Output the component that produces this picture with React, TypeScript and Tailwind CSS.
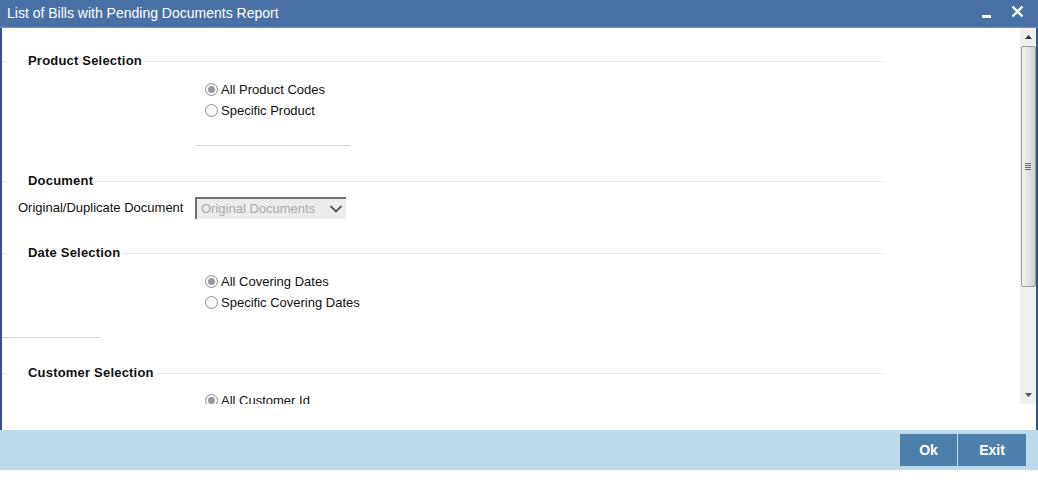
import React from 'react'

const Radio = ({ checked, label }: { checked?: boolean; label: string }) => (
  <div className="flex items-center h-[21px] ml-[203px]">
    <span className="w-[13px] h-[13px] rounded-full border border-[#8e8e8e] bg-[#fafafa] flex items-center justify-center">
      {checked && <span className="w-[7px] h-[7px] rounded-full bg-[#9a9a9a]" />}
    </span>
    <span className="ml-[3px] text-[13px] text-[#111]">{label}</span>
  </div>
)

const Legend = ({ title }: { title: string }) => (
  <div className="flex items-center h-[20px] w-[882px]">
    <div className="w-[5px] h-px bg-[#e6e6e6]" />
    <span className="ml-[21px] text-[13px] font-bold text-[#111] tracking-[0.2px]">{title}</span>
    <div className="ml-[2px] flex-1 h-px bg-[#ebebeb]" />
  </div>
)

export default function App() {
  return (
    <div className="w-[1038px] h-[483px] bg-white flex flex-col font-['Liberation_Sans',Arial,sans-serif]">
      <div className="h-[28px] shrink-0 bg-[#4a70a8] border-b border-[#6e8fbd] flex items-center justify-between pl-[7px] pr-[14px]">
        <span className="text-white text-[14px]">List of Bills with Pending Documents Report</span>
        <div className="flex items-center gap-[20px]">
          <div className="w-[9px] h-[3px] bg-white mt-[5px]" />
          <svg width="13" height="13" viewBox="0 0 13 13" className="mb-[5px]">
            <path d="M1.5 1.5 L11.5 11.5 M11.5 1.5 L1.5 11.5" stroke="white" strokeWidth="2.4" />
          </svg>
        </div>
      </div>

      <div className="h-[402px] shrink-0 flex">
        <div className="w-[2px] bg-[#2f5388]" />
        <div className="flex-1 flex flex-col">
          <div className="h-[376px] shrink-0 flex">
            <div className="flex-1 overflow-hidden">
              <div className="mt-[23px]">
                <Legend title="Product Selection" />
              </div>
              <div className="mt-[8px]">
                <Radio checked label="All Product Codes" />
                <Radio label="Specific Product" />
              </div>
              <div className="mt-[24px] ml-[193px] w-[155px] h-px bg-[#d4d4d4]" />

              <div className="mt-[25px]">
                <Legend title="Document" />
              </div>
              <div className="mt-[6px] flex items-center h-[22px]">
                <span className="ml-[16px] w-[177px] text-[13px] text-[#111]">Original/Duplicate Document</span>
                <div className="w-[151px] h-[22px] bg-[#ececec] border-t-2 border-l-2 border-[#707070] flex items-center justify-between pl-[4px] pr-[3px]">
                  <span className="text-[13px] text-[#a8a8a8]">Original Documents</span>
                  <svg width="14" height="10" viewBox="0 0 14 10">
                    <path d="M1.5 2 L7 7.5 L12.5 2" stroke="#555" strokeWidth="1.8" fill="none" />
                  </svg>
                </div>
              </div>

              <div className="mt-[24px]">
                <Legend title="Date Selection" />
              </div>
              <div className="mt-[8px]">
                <Radio checked label="All Covering Dates" />
                <Radio label="Specific Covering Dates" />
              </div>
              <div className="mt-[24px] w-[99px] h-px bg-[#d4d4d4]" />

              <div className="mt-[25px]">
                <Legend title="Customer Selection" />
              </div>
              <div className="mt-[7px]">
                <Radio checked label="All Customer Id" />
              </div>
            </div>

            <div className="w-[16px] bg-[#f0f0f0] flex flex-col items-center">
              <div className="h-[18px] flex items-center justify-center">
                <svg width="7" height="4" viewBox="0 0 7 4">
                  <path d="M0 4 L3.5 0 L7 4 Z" fill="#333" />
                </svg>
              </div>
              <div className="w-[15px] h-[241px] rounded-[2px] border border-[#9c9c9c] bg-gradient-to-r from-[#f2f2f2] via-[#e2e2e2] to-[#cfcfcf] flex items-center justify-center">
                <div className="flex flex-col gap-[1px]">
                  <div className="w-[6px] h-px bg-[#6a6a6a]" />
                  <div className="w-[6px] h-px bg-[#6a6a6a]" />
                  <div className="w-[6px] h-px bg-[#6a6a6a]" />
                  <div className="w-[6px] h-px bg-[#6a6a6a]" />
                </div>
              </div>
              <div className="flex-1" />
              <div className="h-[18px] flex items-center justify-center">
                <svg width="7" height="4" viewBox="0 0 7 4">
                  <path d="M0 0 L3.5 4 L7 0 Z" fill="#555" />
                </svg>
              </div>
            </div>
          </div>
          <div className="flex-1 bg-white" />
        </div>
        <div className="w-[2px] bg-[#2f5388]" />
      </div>

      <div className="h-[40px] shrink-0 bg-[#bed8ec] flex items-center justify-end pr-[12px]">
        <button className="w-[57px] h-[32px] bg-[#4a80ab] text-white text-[14px] font-bold">Ok</button>
        <button className="ml-px w-[68px] h-[32px] bg-[#4a80ab] text-white text-[14px] font-bold">Exit</button>
      </div>
      <div className="flex-1 bg-white" />
    </div>
  )
}
